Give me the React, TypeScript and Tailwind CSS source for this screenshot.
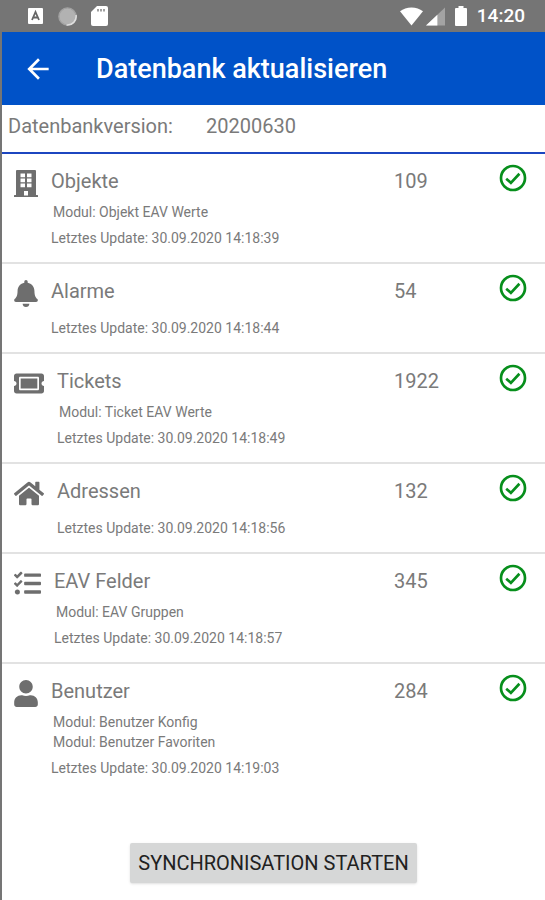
import type { ComponentType } from "react";
import { FaBell, FaHome, FaTasks, FaTicketAlt, FaUser } from "react-icons/fa";
import { MdArrowBack } from "react-icons/md";

type Entry = {
  name: string;
  count: number;
  icon: ComponentType<{ className?: string }>;
  iconClass: string;
  modules: string[];
  updated: string;
};

function BuildingIcon({ className }: { className?: string }) {
  return (
    <svg className={className} viewBox="0 0 24 27" fill="currentColor" aria-hidden="true">
      <path
        fillRule="evenodd"
        d="M3 0h18a1 1 0 0 1 1 1v24h1.500a.5.5 0 0 1 .5.5V27H0v-1.500a.5.5 0 0 1 .5-.5H2V1a1 1 0 0 1 1-1zM6.500 3.500v3.700H11V3.500zM13 3.500v3.700h4.500V3.500zM6.500 8.500v3.700H11V8.500zM13 8.500v3.700h4.500V8.500zM6.500 13.500v3.700H11v-3.700zM13 13.500v3.700h4.500v-3.700zM10 21v4.500h4V21z"
      />
    </svg>
  );
}

const entries: Entry[] = [
  {
    name: "Objekte",
    count: 109,
    icon: BuildingIcon,
    iconClass: "w-6",
    modules: ["Objekt EAV Werte"],
    updated: "30.09.2020 14:18:39",
  },
  {
    name: "Alarme",
    count: 54,
    icon: FaBell,
    iconClass: "w-6",
    modules: [],
    updated: "30.09.2020 14:18:44",
  },
  {
    name: "Tickets",
    count: 1922,
    icon: FaTicketAlt,
    iconClass: "w-[30px]",
    modules: ["Ticket EAV Werte"],
    updated: "30.09.2020 14:18:49",
  },
  {
    name: "Adressen",
    count: 132,
    icon: FaHome,
    iconClass: "w-[30px]",
    modules: [],
    updated: "30.09.2020 14:18:56",
  },
  {
    name: "EAV Felder",
    count: 345,
    icon: FaTasks,
    iconClass: "w-[27px]",
    modules: ["EAV Gruppen"],
    updated: "30.09.2020 14:18:57",
  },
  {
    name: "Benutzer",
    count: 284,
    icon: FaUser,
    iconClass: "w-6",
    modules: ["Benutzer Konfig", "Benutzer Favoriten"],
    updated: "30.09.2020 14:19:03",
  },
];

function StatusBar() {
  return (
    <div className="flex h-8 items-center bg-[#757575] pr-5 pl-[26px] text-white">
      <svg width="15" height="16" viewBox="0 0 15 16" aria-hidden="true">
        <rect width="15" height="16" rx="1" fill="#fff" />
        <path d="M4 12 7.500 4 11 12M5.300 9.500h4.400" fill="none" stroke="#666" strokeWidth="1.800" />
      </svg>
      <svg className="ml-[15px]" width="19" height="19" viewBox="0 0 19 19" aria-hidden="true">
        <circle cx="9.500" cy="9.500" r="8.600" fill="#b2b2b2" stroke="#a2a2a2" strokeWidth="1.400" />
        <path d="M18 8A8.600 8.600 0 0 1 8.500 18" fill="none" stroke="#dedede" strokeWidth="1.600" />
      </svg>
      <svg className="ml-3.5" width="17" height="20" viewBox="0 0 17 20" aria-hidden="true">
        <path d="M6 0h9a2 2 0 0 1 2 2v16a2 2 0 0 1-2 2H2a2 2 0 0 1-2-2V6z" fill="#fff" />
        <path d="M7 3v2.500M10 3v2.500M13 3v2.500" stroke="#8a8a8a" strokeWidth="1.600" />
      </svg>
      <div className="ml-auto flex items-center">
        <svg width="23" height="19" viewBox="0 0 24 19" aria-hidden="true">
          <path d="M12 19 0 4Q5 0 12 0t12 4z" fill="#fff" />
        </svg>
        <svg className="ml-[3px]" width="19" height="19" viewBox="0 0 20 19" aria-hidden="true">
          <path d="M20 0v19H0z" fill="#a3a3a3" />
          <path d="M12 7.600V19H0z" fill="#fff" />
        </svg>
        <svg className="ml-2.5" width="12" height="20" viewBox="0 0 12 20" aria-hidden="true">
          <path d="M3.500 0h5v2H11a1 1 0 0 1 1 1v16a1 1 0 0 1-1 1H1a1 1 0 0 1-1-1V3a1 1 0 0 1 1-1h2.500z" fill="#fff" />
        </svg>
        <span className="ml-2.5 text-[19px] leading-6 font-medium">14:20</span>
      </div>
    </div>
  );
}

function CheckIcon() {
  return (
    <svg className="size-8" viewBox="0 0 24 24" fill="none" stroke="#078f1c" strokeWidth="2" role="img" aria-label="Aktuell">
      <circle cx="12" cy="12" r="9" />
      <path d="m6.900 12.600 3.500 3 6.400-6.800" />
    </svg>
  );
}

function EntryRow({ name, count, icon: Icon, iconClass, modules, updated }: Entry) {
  return (
    <li className="flex items-start border-b-2 border-[#e2e2e2] pt-[13px] pr-4 pb-3.5 pl-3 text-[#7a7a7a] last:border-b-0">
      <Icon className={`mt-[3px] h-[27px] shrink-0 text-[#6e6e6e] ${iconClass}`} />
      <div className="ml-[13px] flex flex-1 flex-col">
        <h2 className="text-[20px] leading-7">{name}</h2>
        <div className="mt-[7px] pl-0.5">
          {modules.map((module) => (
            <p key={module} className="text-sm leading-5">
              Modul: {module}
            </p>
          ))}
        </div>
        <p className="mt-1.5 text-sm leading-5">Letztes Update: {updated}</p>
      </div>
      <span className="w-[103px] text-[20px] leading-7">{count}</span>
      <div className="-mt-[5px]">
        <CheckIcon />
      </div>
    </li>
  );
}

export default function App() {
  return (
    <div className="min-h-screen border-l-2 border-[#757575] bg-white font-[Roboto,sans-serif]">
      <StatusBar />
      <header className="flex h-[73px] items-center bg-[#0052c8] pl-5 text-white">
        <button type="button" aria-label="Zurück">
          <MdArrowBack className="size-8" />
        </button>
        <h1 className="ml-[42px] text-[27px] leading-8 font-medium">Datenbank aktualisieren</h1>
      </header>
      <div className="flex border-b-2 border-[#1c46c0] pt-[7px] pb-3 pl-1.5 text-[20px] leading-7 text-[#7a7a7a]">
        <span className="w-[198px]">Datenbankversion:</span>
        <span>20200630</span>
      </div>
      <ul>
        {entries.map((entry) => (
          <EntryRow key={entry.name} {...entry} />
        ))}
      </ul>
      <div className="mt-[51px] flex justify-center pb-4">
        <button type="button" className="rounded-xs bg-[#d6d7d7] px-2 py-1.5 text-[20px] leading-7 text-[#212121] shadow-sm">
          SYNCHRONISATION STARTEN
        </button>
      </div>
    </div>
  );
}
